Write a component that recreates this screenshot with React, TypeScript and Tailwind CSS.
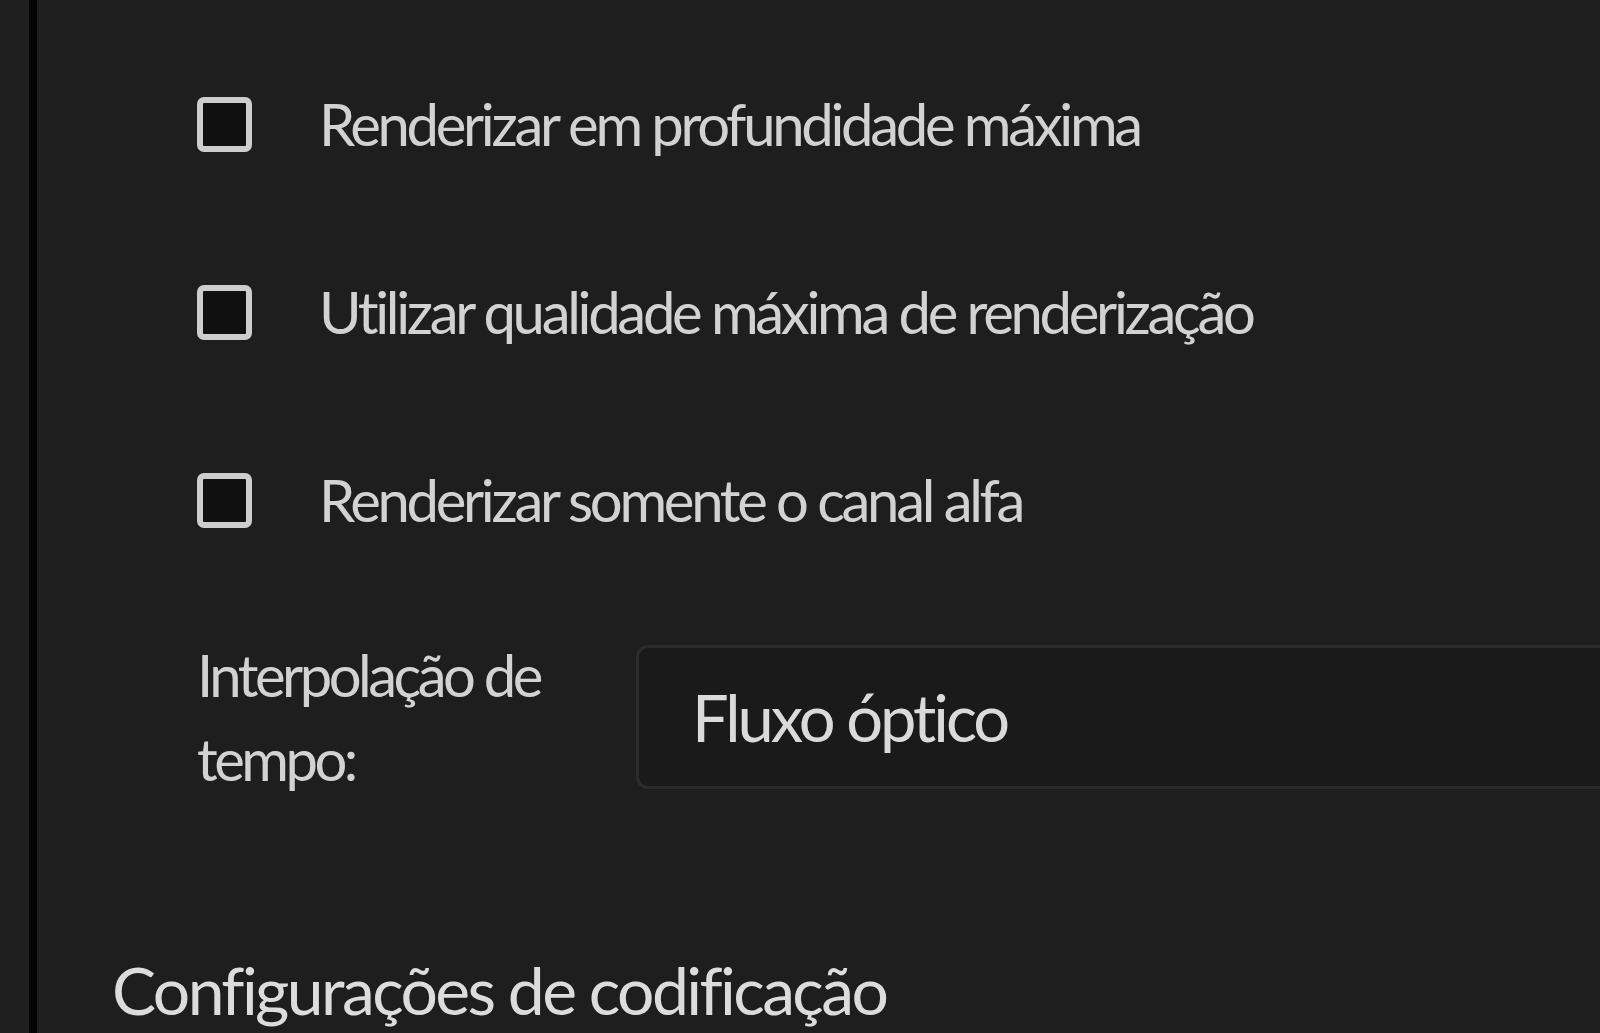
import React from 'react';

const font = { fontFamily: '"Lato", "Noto Sans", sans-serif' };

const CheckRow: React.FC<{ label: string }> = ({ label }) => (
  <div className="flex h-[54px] items-center">
    <div className="h-[55px] w-[55px] shrink-0 rounded-[7px] border-[6px] border-[#cdcdcd] bg-[#101010]" />
    <span className="ml-[67px] text-[58px] leading-none tracking-[-3.3px] text-[#d2d2d2]">{label}</span>
  </div>
);

export default function App() {
  return (
    <div className="flex h-[1033px] w-[1600px] overflow-hidden bg-[#1e1e1e]" style={font}>
      <div className="w-[29px] shrink-0 bg-[#1e1e1e]" />
      <div className="w-[8px] shrink-0 bg-[#050505]" />
      <div className="flex flex-1 flex-col">
        <div className="ml-[160px] mt-[97px] flex flex-col gap-[134px]">
          <CheckRow label="Renderizar em profundidade máxima" />
          <CheckRow label="Utilizar qualidade máxima de renderização" />
          <CheckRow label="Renderizar somente o canal alfa" />
        </div>

        <div className="ml-[160px] mt-[118px] flex h-[144px] items-center">
          <div className="w-[439px] shrink-0 text-[58px] leading-[84px] tracking-[-3.5px] text-[#d2d2d2]">
            Interpolação de
            <br />
            tempo:
          </div>
          <div className="flex h-full flex-1 items-center rounded-l-[12px] border-y-[3px] border-l-[3px] border-[#2c2c2c] bg-[#1a1a1a] pl-[53px]">
            <span className="text-[65px] leading-none tracking-[-3px] text-[#dadada]">Fluxo óptico</span>
          </div>
        </div>

        <h2 className="ml-[75px] mt-[161px] text-[66px] font-normal leading-[80px] tracking-[-2.6px] text-[#dcdcdc]">
          Configurações de codificação
        </h2>
      </div>
    </div>
  );
}
